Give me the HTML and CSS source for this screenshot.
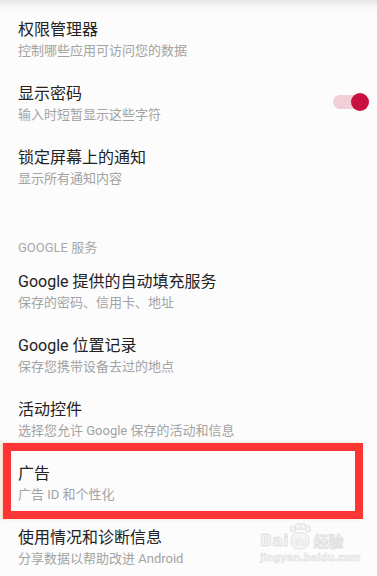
FILE: index.html
```html
<!DOCTYPE html>
<html lang="zh-CN">
<head>
<meta charset="utf-8">
<link rel="stylesheet" href="styles.css">
</head>
<body>
<div class="page">
  <ul class="list">
    <li class="item">
      <div class="text"><div class="title">权限管理器</div><div class="sub">控制哪些应用可访问您的数据</div></div>
    </li>
    <li class="item">
      <div class="text"><div class="title">显示密码</div><div class="sub">输入时短暂显示这些字符</div></div>
      <div class="toggle"><span class="track"></span><span class="thumb"></span></div>
    </li>
    <li class="item">
      <div class="text"><div class="title">锁定屏幕上的通知</div><div class="sub">显示所有通知内容</div></div>
    </li>
  </ul>
  <div class="header">GOOGLE 服务</div>
  <ul class="list">
    <li class="item">
      <div class="text"><div class="title">Google 提供的自动填充服务</div><div class="sub">保存的密码、信用卡、地址</div></div>
    </li>
    <li class="item">
      <div class="text"><div class="title">Google 位置记录</div><div class="sub">保存您携带设备去过的地点</div></div>
    </li>
    <li class="item">
      <div class="text"><div class="title">活动控件</div><div class="sub">选择您允许 Google 保存的活动和信息</div></div>
    </li>
    <li class="item highlight">
      <div class="text"><div class="title">广告</div><div class="sub">广告 ID 和个性化</div></div>
    </li>
    <li class="item">
      <div class="text"><div class="title">使用情况和诊断信息</div><div class="sub">分享数据以帮助改进 Android</div></div>
    </li>
  </ul>
  <div class="watermark">
    <div class="wm-row">
      <span class="wm-bai">Bai</span>
      <span class="wm-paw">
        <svg width="24" height="27" viewBox="0 0 24 27">
          <g fill="#f4f4f4" stroke="#e2e2e2" stroke-width="1">
            <ellipse cx="5" cy="6" rx="2.6" ry="3.2"/>
            <ellipse cx="10" cy="3.5" rx="2.6" ry="3.2"/>
            <ellipse cx="15" cy="3.5" rx="2.6" ry="3.2"/>
            <ellipse cx="20" cy="6" rx="2.6" ry="3.2"/>
            <path d="M3 18 C3 11 8 9.5 12 9.5 C16 9.5 21 11 21 18 C21 24 17 26 12 26 C7 26 3 24 3 18 Z"/>
          </g>
          <text x="12" y="22" text-anchor="middle" class="wm-du">du</text>
        </svg>
      </span>
      <span class="wm-jy">经验</span>
    </div>
    <div class="wm-url">jingyan.baidu.com</div>
  </div>
</div>
</body>
</html>
```
FILE: styles.css
```css
html, body {
  margin: 0;
  padding: 0;
}
body {
  width: 377px;
  height: 576px;
  overflow: hidden;
  background: linear-gradient(to bottom, #e6e6e6 0px, #f6f6f6 6px, #fcfcfc 14px, #fcfcfc 100%);
  font-family: Roboto, "Noto Sans CJK SC", sans-serif;
}
.page {
  position: relative;
  height: 576px;
  padding-top: 8px;
  box-sizing: border-box;
}
.list {
  list-style: none;
  margin: 0;
  padding: 0;
}
.item {
  position: relative;
  height: 64px;
  box-sizing: border-box;
  padding: 11px 8px 0 18px;
  display: flex;
  align-items: flex-start;
  justify-content: space-between;
}
.title {
  font-size: 16px;
  line-height: 22px;
  color: #222222;
}
.sub {
  font-size: 13px;
  line-height: 20px;
  color: #a3a3a3;
}
.header {
  padding: 40px 18px 4px;
  font-size: 13px;
  line-height: 16px;
  color: #a8a8a8;
}
.toggle {
  position: relative;
  width: 36px;
  height: 18px;
  margin-top: 10px;
}
.track {
  position: absolute;
  left: 0;
  top: 2px;
  width: 34px;
  height: 14px;
  border-radius: 7px;
  background: #f2cfd8;
}
.thumb {
  position: absolute;
  right: 0;
  top: 0;
  width: 18px;
  height: 18px;
  border-radius: 50%;
  background: #c8113f;
}
.highlight::after {
  content: "";
  position: absolute;
  top: -9px;
  left: 3px;
  right: 14px;
  bottom: -3px;
  border: 8px solid #fd3535;
  box-shadow: -2px 0 3px rgba(255, 140, 60, 0.35);
  pointer-events: none;
}
.watermark {
  position: absolute;
  left: 260px;
  top: 522px;
  width: 92px;
}
.wm-row {
  display: flex;
  align-items: flex-end;
  height: 28px;
}
.wm-bai, .wm-jy {
  font-family: "DejaVu Sans", sans-serif;
  font-weight: bold;
  font-size: 16px;
  line-height: 16px;
  color: #f4f4f4;
  -webkit-text-stroke: 0.8px #dedede;
  margin-bottom: 1px;
}
.wm-jy {
  font-family: "Noto Sans CJK SC", sans-serif;
  font-size: 15px;
  margin-left: 1px;
}
.wm-paw {
  display: block;
  width: 24px;
  height: 27px;
}
.wm-paw svg {
  display: block;
}
.wm-du {
  font-family: "DejaVu Sans", sans-serif;
  font-weight: bold;
  font-size: 9px;
  fill: #ffffff;
  stroke: #dcdcdc;
  stroke-width: 0.5px;
}
.wm-url {
  font-family: "DejaVu Sans", sans-serif;
  font-weight: bold;
  font-size: 10px;
  line-height: 12px;
  margin-top: 2px;
  color: #f2f2f2;
  -webkit-text-stroke: 0.5px #dedede;
  letter-spacing: -0.2px;
}
```
